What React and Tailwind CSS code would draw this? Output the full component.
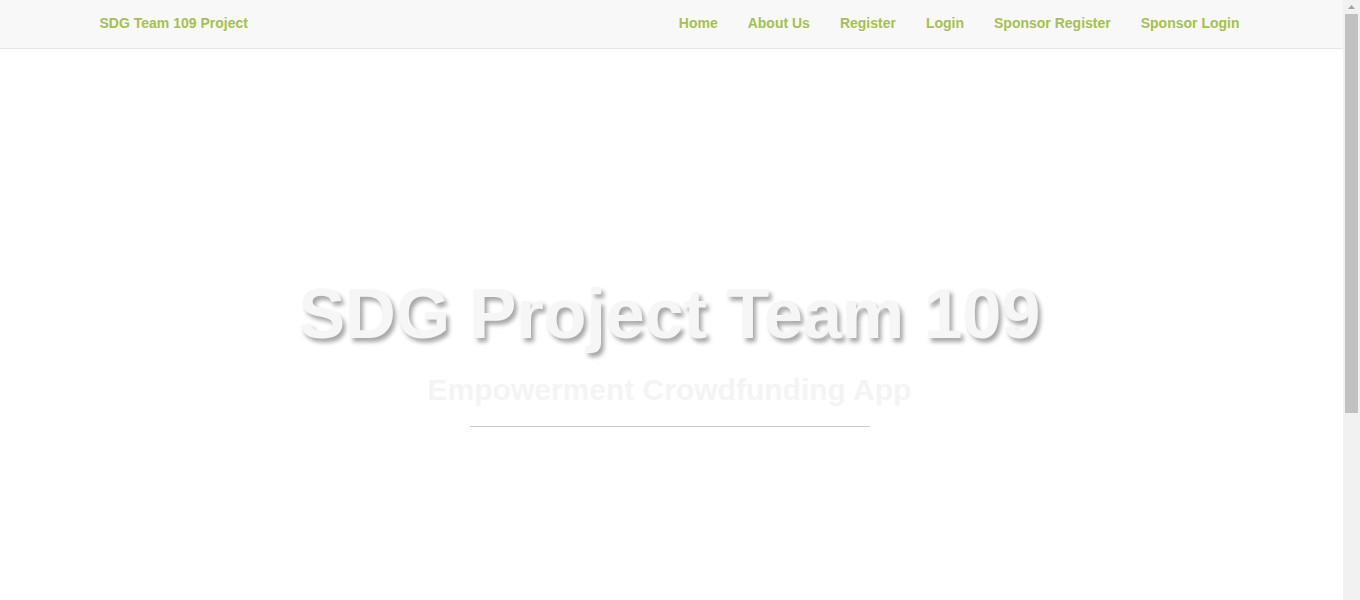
const links = ['Home', 'About Us', 'Register', 'Login', 'Sponsor Register', 'Sponsor Login'];

function Scrollbar() {
  return (
    <div className="flex w-[17px] shrink-0 flex-col items-center bg-[#f1f1f1]">
      <div className="flex h-[14px] w-full items-center justify-center">
        <svg width="7" height="4" viewBox="0 0 7 4">
          <path d="M3.5 0 L7 4 L0 4 Z" fill="#a3a3a3" />
        </svg>
      </div>
      <div className="h-[399px] w-[13px] bg-[#c1c1c1]" />
    </div>
  );
}

export default function App() {
  return (
    <div className="flex h-[600px] overflow-hidden bg-white font-['Liberation_Sans',Arial,sans-serif]">
      <div className="min-w-0 flex-1">
        <nav className="h-[49px] border-b border-[#e7e7e7] bg-[#f8f8f8] pr-[4px]">
          <div className="mx-auto flex h-full w-[1170px] items-center justify-between px-[15px] pb-[2px]">
            <a href="#" className="text-[14px] font-bold text-[#a5c14b]">SDG Team 109 Project</a>
            <ul className="-mr-[15px] flex items-center">
              {links.map((link) => (
                <li key={link}>
                  <a href="#" className="block px-[15px] text-[14px] font-bold text-[#a5c14b]">{link}</a>
                </li>
              ))}
            </ul>
          </div>
        </nav>

        <section className="flex flex-col items-center pt-[230px] pr-[4px]">
          <h1 className="text-[70px] leading-none font-bold text-[#f6f6f6] [text-shadow:3px_4px_4px_rgba(0,0,0,0.35)]">
            SDG Project Team 109
          </h1>
          <h3 className="mt-[26px] text-[30px] leading-none font-bold text-[#f4f4f4]">
            Empowerment Crowdfunding App
          </h3>
          <hr className="mt-[21px] w-[400px] border-t border-[#cccccc]" />
        </section>
      </div>
      <Scrollbar />
    </div>
  );
}
